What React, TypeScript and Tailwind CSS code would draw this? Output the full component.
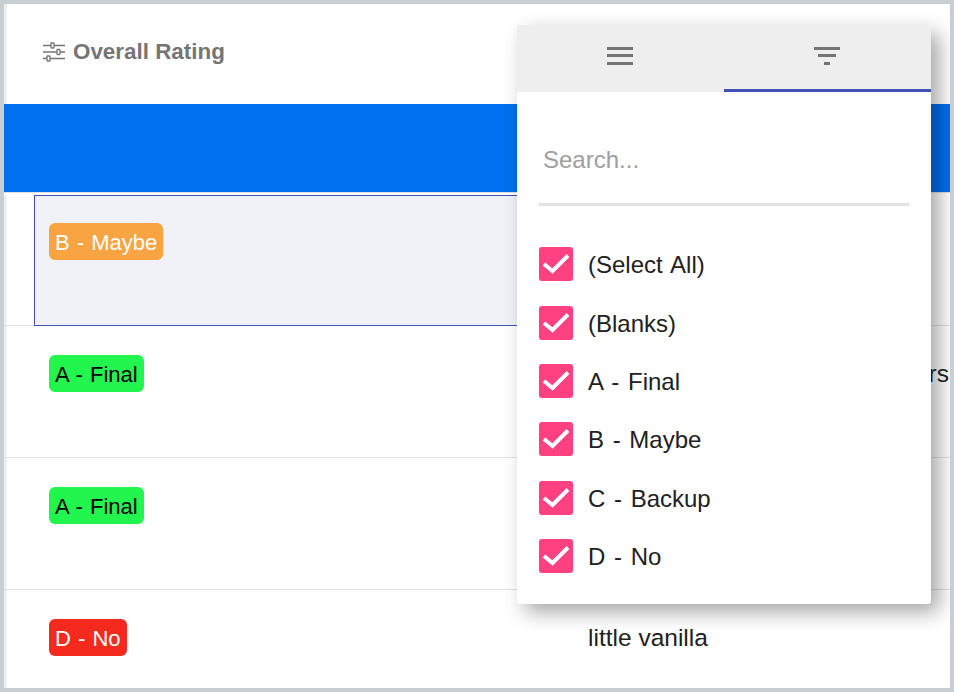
const rows = [
  { label: 'B - Maybe', badge: 'bg-[#f9a443] text-white', selected: true, text: '', alignEnd: false },
  { label: 'A - Final', badge: 'bg-[#22f64e] text-black', selected: false, text: 'rs', alignEnd: true },
  { label: 'A - Final', badge: 'bg-[#22f64e] text-black', selected: false, text: '', alignEnd: false },
  { label: 'D - No', badge: 'bg-[#f52a1f] text-white', selected: false, text: 'little vanilla', alignEnd: false },
];

const options = ['(Select All)', '(Blanks)', 'A - Final', 'B - Maybe', 'C - Backup', 'D - No'];

function SlidersIcon() {
  return (
    <svg width="24" height="20" viewBox="0 0 24 20" fill="none" stroke="#757575" strokeWidth="1.3">
      <path d="M1 3.5h8M12 3.5h11M1 10h14M18 10h5M1 16.5h4M8 16.5h15" />
      <rect x="9" y="1" width="3" height="5" rx="0.5" />
      <rect x="15" y="7.5" width="3" height="5" rx="0.5" />
      <rect x="5" y="14" width="3" height="5" rx="0.5" />
    </svg>
  );
}

function FilterMenu() {
  return (
    <div className="absolute left-[513px] top-[21px] z-10 h-[579px] w-[414px] rounded-[3px] bg-white shadow-[8px_8px_20px_rgba(0,0,0,0.35)]">
      <div className="flex h-[67px] rounded-t-[3px] bg-[#eeeeee]">
        <div className="flex flex-1 items-center justify-center pb-[6px] pr-[2px]">
          <svg width="26" height="18" viewBox="0 0 26 18" fill="#757575">
            <rect y="0" width="26" height="3" />
            <rect y="7" width="26" height="3" />
            <rect y="15" width="26" height="3" />
          </svg>
        </div>
        <div className="flex flex-1 items-center justify-center border-b-[3px] border-[#3f51b5] pb-[3px] pr-[2px]">
          <svg width="26" height="18" viewBox="0 0 26 18" fill="#757575">
            <rect x="0" y="0" width="26" height="3" />
            <rect x="4" y="7" width="18" height="3" />
            <rect x="10" y="15" width="6" height="3" />
          </svg>
        </div>
      </div>
      <div className="px-[22px]">
        <div className="mt-[39px] flex h-[75px] items-start border-b-[3px] border-[#e2e2e2] px-[4px] text-[24px] leading-[60px] text-[#9e9e9e]">
          <span className="-mt-[1px]">Search...</span>
        </div>
        <div className="mt-[29px] flex flex-col">
          {options.map((o) => (
            <div key={o} className="flex h-[58.4px] items-center gap-[15px]">
              <span className="flex h-[34px] w-[34px] items-center justify-center rounded-[3px] bg-[#ff4081]">
                <svg width="34" height="34" viewBox="0 0 34 34" fill="none" stroke="white" strokeWidth="4">
                  <path d="M5 17l8.5 7L29 8.5" />
                </svg>
              </span>
              <span className="relative top-[1px] text-[24px] leading-none text-[#212121] [word-spacing:2px]">{o}</span>
            </div>
          ))}
        </div>
      </div>
    </div>
  );
}

export default function App() {
  return (
    <div className="relative h-[692px] w-[954px] overflow-hidden border-4 border-[#c9ced2] bg-white font-['Liberation_Sans',Arial,sans-serif]">
      <div className="flex h-[100px] items-center gap-[7px] border-l-[3px] border-[#eeeeee] pl-[35px] pb-[5px]">
        <SlidersIcon />
        <span className="text-[22.4px] font-bold text-[#757575]">Overall Rating</span>
      </div>
      <div className="h-[88px] bg-[#006ff0]" />
      {rows.map((row, i) => (
        <div
          key={i}
          className={`flex border-[#dfe1e3] ${i === 0 ? 'h-[134px] border-t border-b pt-[2px]' : 'h-[132px] border-b'} ${i === 3 ? 'border-b-0' : ''}`}
        >
          <div className="w-[3px] shrink-0 bg-[#eeeeee]" />
          <div
            className={`ml-[27px] w-[554px] shrink-0 ${
              row.selected ? '-mb-px border border-[#3f51b5] bg-[#f1f2f8] pl-[14px] pt-[27px]' : 'pl-[15px] pt-[29px]'
            }`}
          >
            <span
              className={`inline-block rounded-[6px] px-[6px] py-[5px] text-[22px] leading-[27px] [word-spacing:1px] ${row.badge}`}
            >
              <span className="relative top-[1px]">{row.label}</span>
            </span>
          </div>
          {row.text && (
            <div className={`flex flex-1 pt-[34px] ${row.alignEnd ? 'justify-end pr-[1px]' : ''}`}>
              <span className="text-[24.5px] leading-[27px] text-[#212121]">{row.text}</span>
            </div>
          )}
        </div>
      ))}
      <FilterMenu />
    </div>
  );
}
